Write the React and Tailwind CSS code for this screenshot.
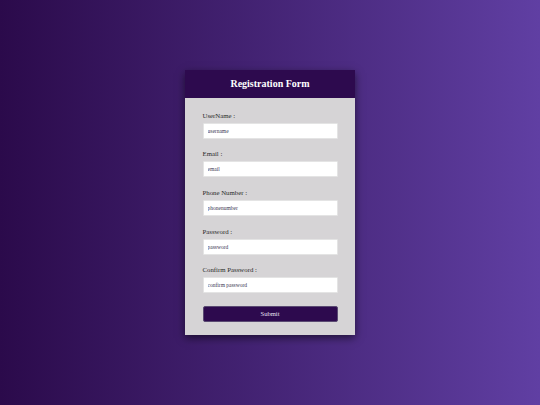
import React from "react";

const fields = [
  { label: "UserName :", placeholder: "username" },
  { label: "Email :", placeholder: "email" },
  { label: "Phone Number :", placeholder: "phonenumber" },
  { label: "Password :", placeholder: "password" },
  { label: "Confirm Password :", placeholder: "confirm password" },
];

const App = () => {
  return (
    <div className="min-h-[405px] w-full flex items-center justify-center bg-gradient-to-r from-[#2b0a4b] to-[#603fa3] font-['Liberation_Serif',serif]">
      <div className="w-[170px] h-[265px] flex flex-col bg-[#d6d4d6] shadow-[0_3px_8px_rgba(0,0,0,0.55)]">
        <div className="h-[28px] flex items-center justify-center bg-[#2d0a4e]">
          <h2 className="text-[10px] leading-none font-bold text-white">
            Registration Form
          </h2>
        </div>
        <form className="flex flex-col px-[17.5px] pt-[13.5px] pb-[12.5px]">
          <div className="flex flex-col gap-[11.7px]">
            {fields.map((f) => (
              <div key={f.label} className="flex flex-col">
                <label className="text-[6.8px] leading-[8px] text-[#2a2a2a] mb-[3px]">
                  {f.label}
                </label>
                <input
                  type="text"
                  placeholder={f.placeholder}
                  className="h-[16px] w-full bg-white rounded-[1px] border border-[#e4e4e4] px-[4px] text-[5.5px] text-[#333] placeholder:text-[#3a3550] outline-none"
                />
              </div>
            ))}
          </div>
          <button
            type="button"
            className="mt-[13px] h-[16px] w-full rounded-[2px] bg-[#2d0a4e] border border-[#5a4a72] text-[6.6px] text-[#e6e0f0]"
          >
            Submit
          </button>
        </form>
      </div>
    </div>
  );
};

export default App;
